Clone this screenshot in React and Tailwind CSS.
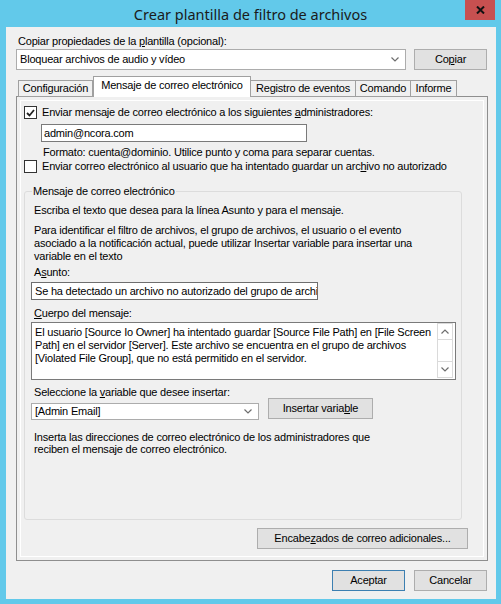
const Box = ({ checked }) => (
  <div className="w-[13px] h-[13px] flex-none border border-[#333333] bg-white flex items-center justify-center">
    {checked && (
      <svg width="9" height="8" viewBox="0 0 9 8">
        <path d="M1 4 L3.5 6.5 L8 1" fill="none" stroke="#222" strokeWidth="1.8" />
      </svg>
    )}
  </div>
)

const Chevron = ({ up }) => (
  <svg width="8" height="5" viewBox="0 0 8 5">
    <path d={up ? "M0.5 4.5 L4 1 L7.5 4.5" : "M0.5 0.5 L4 4 L7.5 0.5"} fill="none" stroke="#6e6e6e" strokeWidth="1.2" />
  </svg>
)

const Button = ({ className = "", children, focused }) => (
  <div
    className={`h-[21px] flex-none border ${focused ? "border-[#3c7fb1]" : "border-[#adadad]"} bg-[#e1e1e1] flex items-center justify-center ${className}`}
  >
    {children}
  </div>
)

const tabs = [
  { name: "Configuración", w: "w-[75px]" },
  { name: "Mensaje de correo electrónico", w: "w-[158px]", active: true },
  { name: "Registro de eventos", w: "w-[106px]" },
  { name: "Comando", w: "w-[56px]" },
  { name: "Informe", w: "w-[47px]" },
]

export default function App() {
  return (
    <div className="w-[501px] h-[604px] bg-[#62c9ea] flex flex-col font-['Liberation_Sans',Arial,sans-serif] text-[11px] leading-[13px] tracking-[-0.2px] text-black">
      {/* Title bar */}
      <div className="h-[27px] flex-none relative flex items-center justify-center">
        <span className="font-['Noto_Sans',sans-serif] text-[14.5px] tracking-normal leading-[20px] text-[#1b1b1b] mt-[1px]">
          Crear plantilla de filtro de archivos
        </span>
        <div className="absolute top-0 right-[6px] w-[30px] h-[20px] bg-[#c75050] flex items-center justify-center">
          <svg width="9" height="8" viewBox="0 0 9 8">
            <path d="M1 0.5 L8 7.5 M8 0.5 L1 7.5" stroke="#111" strokeWidth="2" />
          </svg>
        </div>
      </div>

      {/* Client area */}
      <div className="flex-1 ml-[6px] mr-[5px] mb-[5px] bg-[#f0f0f0] pl-[10px] pr-[8px] pt-[8px] flex flex-col">
        <div className="pl-[2px] h-[13px]">
          Copiar propiedades de la <u>p</u>lantilla (opcional):
        </div>
        <div className="flex mt-[1px]">
          <div className="w-[390px] h-[21px] border border-[#acacac] bg-white flex items-center pl-[3px] pr-[6px]">
            <span className="flex-1">Bloquear archivos de audio y vídeo</span>
            <Chevron />
          </div>
          <Button className="ml-[8px] w-[73px]">
            Co<u>p</u>iar
          </Button>
        </div>

        {/* Tabs */}
        <div className="flex items-end mt-[6px] pl-[2px] h-[21px] -mb-[1px] relative z-10">
          {tabs.map((t) =>
            t.active ? (
              <div
                key={t.name}
                className={`${t.w} h-[21px] bg-white border border-b-0 border-[#a0a0a0] flex items-start justify-center pt-[2px]`}
              >
                {t.name}
              </div>
            ) : (
              <div
                key={t.name}
                className={`${t.w} h-[17px] border border-[#a0a0a0] -ml-[1px] first:ml-0 flex items-center justify-center bg-[#f0f0f0]`}
              >
                {t.name}
              </div>
            ),
          )}
        </div>

        {/* Tab page */}
        <div className="h-[465px] border border-[#8e8e8e] p-[3px]">
          <div className="h-full border border-white flex flex-col pl-[3px] pt-[5px]">
            <div className="flex items-center h-[13px]">
              <Box checked />
              <span className="ml-[5px]">
                Enviar mensaje de correo electrónico a los siguientes <u>a</u>dministradores:
              </span>
            </div>
            <div className="mt-[5px] ml-[17px] w-[266px] h-[18px] border border-[#7a7a7a] bg-white flex items-center pl-[2px]">
              admin@ncora.com
            </div>
            <div className="mt-[4px] ml-[19px] h-[13px]">
              Formato: cuenta@dominio. Utilice punto y coma para separar cuentas.
            </div>
            <div className="flex items-center h-[13px] mt-[1px]">
              <Box />
              <span className="ml-[5px]">
                Enviar correo electrónico al usuario que ha intentado guardar un arc<u>h</u>ivo no autorizado
              </span>
            </div>

            <fieldset className="mt-[12px] w-[438px] h-[335px] border border-[#dcdcdc] rounded-[3px] pl-[9px] pt-[6px] flex flex-col">
              <legend className="-ml-[2px] px-[1px] leading-[13px]">Mensaje de correo electrónico</legend>
              <div>Escriba el texto que desea para la línea Asunto y para el mensaje.</div>
              <div className="mt-[7px] whitespace-nowrap">
                Para identificar el filtro de archivos, el grupo de archivos, el usuario o el evento
                <br />
                asociado a la notificación actual, puede utilizar Insertar variable para insertar una
                <br />
                variable en el texto
              </div>
              <div className="mt-[3px]">
                A<u>s</u>unto:
              </div>
              <div className="mt-[3px] -ml-[3px] w-[287px] h-[18px] border border-[#6e6e6e] bg-white flex items-center pl-[3px] overflow-hidden whitespace-nowrap">
                Se ha detectado un archivo no autorizado del grupo de archivos
              </div>
              <div className="mt-[7px]">
                <u>C</u>uerpo del mensaje:
              </div>
              <div className="mt-[2px] -ml-[3px] w-[425px] h-[58px] border border-[#7a7a7a] bg-white flex">
                <div className="flex-1 min-w-0 overflow-hidden pl-[3px] pt-[3px] whitespace-nowrap">
                  El usuario [Source Io Owner] ha intentado guardar [Source File Path] en [File Screen
                  <br />
                  Path] en el servidor [Server]. Este archivo se encuentra en el grupo de archivos
                  <br />
                  [Violated File Group], que no está permitido en el servidor.
                </div>
                <div className="w-[16px] h-[55px] mr-[2px] flex-none border border-[#dadada] flex flex-col">
                  <div className="h-[16px] border-b border-[#dadada] flex items-center justify-center">
                    <Chevron up />
                  </div>
                  <div className="flex-1" />
                  <div className="h-[16px] border-t border-[#dadada] flex items-center justify-center">
                    <Chevron />
                  </div>
                </div>
              </div>
              <div className="mt-[6px]">
                Seleccione la <u>v</u>ariable que desee insertar:
              </div>
              <div className="flex items-start -mt-[1px]">
                <div className="mt-[5px] -ml-[3px] w-[228px] h-[17px] border border-[#acacac] bg-white flex items-center pl-[3px] pr-[6px]">
                  <span className="flex-1">[Admin Email]</span>
                  <Chevron />
                </div>
                <Button className="ml-[9px] w-[105px] h-[20px]">
                  Insertar varia<u>b</u>le
                </Button>
              </div>
              <div className="mt-[11px] leading-[12px]">
                Inserta las direcciones de correo electrónico de los administradores que
                <br />
                reciben el mensaje de correo electrónico.
              </div>
            </fieldset>

            <div className="flex justify-end mt-[8px] mr-[15px]">
              <Button className="w-[211px]">
                Encabe<u>z</u>ados de correo adicionales...
              </Button>
            </div>
          </div>
        </div>

        {/* Dialog buttons */}
        <div className="flex justify-end mt-[9px] pr-[1px]">
          <Button focused className="w-[73px]">
            Aceptar
          </Button>
          <Button className="ml-[9px] w-[73px]">Cancelar</Button>
        </div>
      </div>
    </div>
  )
}
